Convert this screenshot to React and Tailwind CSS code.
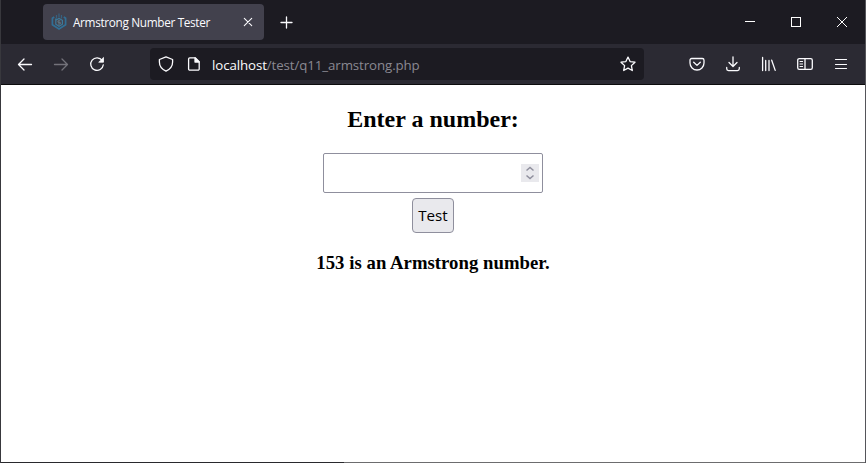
function Icon({ children, className = "", color = "#fbfbfe", width = 1.3 }) {
  return (
    <svg viewBox="0 0 16 16" className={`size-4 shrink-0 ${className}`} fill="none" stroke={color} strokeWidth={width} strokeLinecap="round" strokeLinejoin="round">
      {children}
    </svg>
  );
}

function Slot({ children }) {
  return <button className="flex h-8 w-9 items-center justify-center">{children}</button>;
}

function Favicon() {
  return (
    <svg viewBox="0 0 16 18" className="h-[18px] w-4 shrink-0" fill="none" stroke="#316f95">
      <path d="M3.2 4 1.4 5.2v6.6L8 16l6.6-4.2V5.2L12.8 4" strokeWidth="1.7" />
      <path d="M5.5 2v3.5M8 .5v4M10.5 2v3.5" strokeWidth="1.2" opacity=".7" />
      <path d="M4.8 5.5v5.7L8 13.2l3.4-2V7.3L8 5.5 5.2 7" stroke="#3b7a9b" strokeWidth="1.2" />
      <path d="M9.3 7.8H7v1.5h2.2V11H7" stroke="#66808c" strokeWidth=".9" />
    </svg>
  );
}

function TabBar() {
  return (
    <div className="flex h-11 items-start bg-[#1c1b22] pl-[42px]">
      <div className="mt-1 flex h-9 w-[221px] items-center rounded bg-[#42414d] pl-2 text-[#fbfbfe]">
        <Favicon />
        <span className="ml-[6px] mt-px w-[160px] whitespace-nowrap font-['Open_Sans','Noto_Sans',sans-serif] text-[11.8px] tracking-[-0.34px]">Armstrong Number Tester</span>
        <Icon className="ml-[7px]" width={1.1}><path d="m4.3 4.3 7.4 7.4m0-7.4-7.4 7.4" /></Icon>
      </div>
      <Icon className="ml-[14px] mt-[14px]" width={1.3}><path d="M8.5 3v11M3 8.5h11" /></Icon>
      <div className="ml-auto flex h-11 items-center">
        <div className="flex w-[46px] justify-center">
          <svg className="h-[10px] w-[10px]" viewBox="0 0 10 10" stroke="#fff" fill="none" shapeRendering="crispEdges"><path d="M0 4.5h10" /></svg>
        </div>
        <div className="flex w-[46px] justify-center">
          <svg className="h-[10px] w-[10px]" viewBox="0 0 10 10" stroke="#fff" fill="none" shapeRendering="crispEdges"><path d="M.5.5h9v9h-9z" /></svg>
        </div>
        <div className="flex w-[46px] justify-center">
          <svg className="h-[10px] w-[10px]" viewBox="0 0 10 10" stroke="#fff" fill="none"><path d="m0 0 10 10M10 0 0 10" /></svg>
        </div>
      </div>
    </div>
  );
}

function NavBar() {
  return (
    <div className="flex h-10 items-center bg-[#2b2a33] px-[6px]">
      <Slot><Icon><path d="M1.5 8.5h13M7 3 1.5 8.5 7 14" /></Icon></Slot>
      <Slot><Icon color="#73727a"><path d="M1.5 8.5h13M9 3l5.5 5.5L9 14" /></Icon></Slot>
      <Slot>
        <Icon>
          <path d="M13.2 4.5A6.3 6.3 0 1 0 14.3 8.8" />
          <path d="M14.5 1.8v4.4h-4.4z" fill="#fbfbfe" strokeWidth=".8" />
        </Icon>
      </Slot>
      <div className="ml-[35px] flex h-8 w-[494px] items-center rounded bg-[#1c1b22] px-2">
        <Icon><path d="M8 .8 1.4 3.5v2.6c0 4.5 3.1 7.5 6.6 9 3.5-1.5 6.6-4.5 6.6-9V3.5z" /></Icon>
        <Icon className="ml-3"><path d="M3.8 1.8h5.4l4 4v7.2a1.2 1.2 0 0 1-1.2 1.2H3.8a1.2 1.2 0 0 1-1.2-1.2V3a1.2 1.2 0 0 1 1.2-1.2z" /><path d="M9 2v4h4z" fill="#fbfbfe" /></Icon>
        <span className="ml-[10px] mt-[3px] whitespace-nowrap font-['Open_Sans','Noto_Sans',sans-serif] text-[13.3px] tracking-[-0.1px] text-[#8a8992]"><span className="text-[#fbfbfe]">localhost</span>/test/q11_armstrong.php</span>
        <Icon className="ml-auto"><path d="m8 1.1 2.1 4.5 4.9.6-3.6 3.4.9 4.9L8 12.1l-4.3 2.4.9-4.9L1 6.2l4.9-.6z" /></Icon>
      </div>
      <div className="ml-auto flex">
        <Slot><Icon><path d="M2.7 2.5h10.6A1.7 1.7 0 0 1 15 4.2V7A7 7 0 0 1 1 7V4.2a1.7 1.7 0 0 1 1.7-1.7zM4.7 6.2 8 9.4l3.3-3.2" /></Icon></Slot>
        <Slot><Icon><path d="M8 .8v9.4M4 6.5l4 4 4-4M1.7 11.5v1.3c0 1.1.8 1.8 1.8 1.8h9c1 0 1.8-.7 1.8-1.8v-1.3" /></Icon></Slot>
        <Slot><Icon><path d="M1.6 1.5v13M4.7 4.5v10M8 4.5v10M10.7 4.2l3.5 10.2" /></Icon></Slot>
        <Slot><Icon><path d="M2.3 2.6h11.4c.9 0 1.6.7 1.6 1.6v7.6c0 .9-.7 1.6-1.6 1.6H2.3c-.9 0-1.6-.7-1.6-1.6V4.2c0-.9.7-1.6 1.6-1.6zM8 2.6v10.8" /><path d="M3 5.5h2.6M3 8h2.6M3 10.5h2.6" strokeWidth="1" /></Icon></Slot>
        <Slot><Icon><path d="M2.5 3.5h11M2.5 8.5h11M2.5 12.5h11" strokeWidth="1.2" /></Icon></Slot>
      </div>
    </div>
  );
}

function Page() {
  return (
    <main className="flex flex-1 flex-col items-center bg-white font-['Liberation_Serif',serif] font-bold text-black">
      <h2 className="mt-5 text-[24px] leading-7">Enter a number:</h2>
      <div className="mt-5 flex h-10 w-[220px] items-center justify-end rounded-[2px] border border-[#8f8f9d] pr-[3px]">
        <div className="flex h-[18px] w-[18px] items-center justify-center bg-[#e9e9ed]">
          <svg viewBox="0 0 18 18" className="size-[18px]" fill="none" stroke="#8f8f9d" strokeWidth="1.5"><path d="m5.5 6.5 3.5-3 3.5 3M5.5 11.5l3.5 3 3.5-3" /></svg>
        </div>
      </div>
      <button className="mt-[5px] flex h-[35px] w-[42px] items-center justify-center rounded border border-[#8f8f9d] bg-[#e9e9ed] font-['Open_Sans','Noto_Sans',sans-serif] text-[15.2px] font-normal">Test</button>
      <h3 className="mt-[19px] text-[18.72px] leading-[22px] tracking-[0.04px]">153 is an Armstrong number.</h3>
    </main>
  );
}

export default function App() {
  return (
    <div className="flex h-[463px] w-[866px] flex-col overflow-hidden border-x border-l-[#38383d] border-r-[#55555a] bg-white">
      <TabBar />
      <NavBar />
      <div className="h-px bg-[#0c0c0d]" />
      <Page />
      <div className="flex h-px bg-[#6c6c6e]">
        <div className="w-[343px] bg-[#29292d]" />
      </div>
    </div>
  );
}
